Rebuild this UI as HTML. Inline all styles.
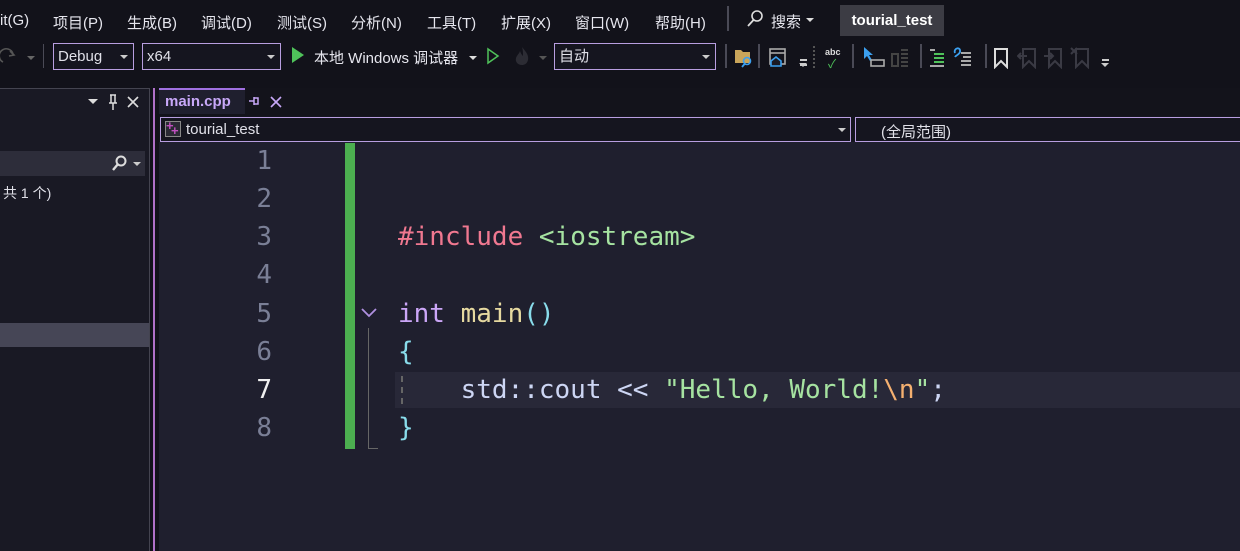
<!DOCTYPE html>
<html><head><meta charset="utf-8"><style>
*{margin:0;padding:0;box-sizing:border-box}
body{width:1240px;height:551px;overflow:hidden;background:#12121a;font-family:"Liberation Sans","Noto Sans CJK SC",sans-serif;color:#d6d6e0;position:relative;font-size:14px}
.a{position:absolute;white-space:nowrap}
.box{position:absolute;border:1px solid #b89ee0;background:#15151f;color:#e0e0e8;font-size:15px;padding-left:4px;line-height:25px}
.dd{position:absolute;right:5px;top:11px;width:0;height:0;border-left:4px solid transparent;border-right:4px solid transparent;border-top:4px solid #ccc}
.tri{position:absolute;width:0;height:0;border-left:4px solid transparent;border-right:4px solid transparent;border-top:4px solid #ccc}
.vs{position:absolute;width:2px;background:#4a4a56;top:44px;height:24px}
.code{position:absolute;font-family:"DejaVu Sans Mono","Liberation Mono",monospace;font-size:26px;line-height:38px;white-space:pre;left:398px}
.ln{position:absolute;font-family:"DejaVu Sans Mono",monospace;font-size:26px;line-height:38px;color:#7a7f96;width:60px;text-align:right;left:212px}
</style></head><body>
<div class="a" style="top:12px;left:0;font-size:15px;color:#e6e6ee">
<span class="a" style="left:0">it(G)</span>
<span class="a" style="left:53px">项目(P)</span>
<span class="a" style="left:127px">生成(B)</span>
<span class="a" style="left:201px">调试(D)</span>
<span class="a" style="left:277px">测试(S)</span>
<span class="a" style="left:351px">分析(N)</span>
<span class="a" style="left:427px">工具(T)</span>
<span class="a" style="left:501px">扩展(X)</span>
<span class="a" style="left:575px">窗口(W)</span>
<span class="a" style="left:655px">帮助(H)</span>
</div>
<div class="a" style="left:727px;top:6px;width:2px;height:25px;background:#4a4a56"></div>
<svg class="a" style="left:745px;top:9px" width="20" height="20"><circle cx="12" cy="7" r="5" fill="none" stroke="#ddd" stroke-width="1.6"/><line x1="8.5" y1="11" x2="3" y2="17" stroke="#ddd" stroke-width="1.8"/></svg>
<div class="a" style="left:771px;top:11px;font-size:15px;color:#e6e6ee">搜索</div>
<div class="tri" style="left:806px;top:18px;border-top-color:#ddd"></div>
<div class="a" style="left:840px;top:5px;width:104px;height:31px;background:#3c3c44;color:#fff;font-weight:bold;font-size:15px;line-height:31px;text-align:center">tourial_test</div>
<svg class="a" style="left:0;top:46px" width="18" height="20"><path d="M3 16 A7 7 0 1 1 13 8" fill="none" stroke="#555" stroke-width="1.6"/><path d="M10 5 L14 9 L9 10" fill="none" stroke="#555" stroke-width="1.6"/></svg>
<div class="tri" style="left:27px;top:56px;border-top-color:#666"></div>
<div class="vs" style="left:43px;width:1px"></div>
<div class="box" style="left:53px;top:43px;width:81px;height:27px">Debug<div class="dd"></div></div>
<div class="box" style="left:142px;top:43px;width:139px;height:27px">x64<div class="dd"></div></div>
<div class="a" style="left:292px;top:47px;border-top:8px solid transparent;border-bottom:8px solid transparent;border-left:12px solid #4fc25a"></div>
<div class="a" style="left:314px;top:47px;font-size:15px;color:#e6e6ee">本地 Windows 调试器</div>
<div class="tri" style="left:469px;top:56px;border-top-color:#ddd"></div>
<svg class="a" style="left:486px;top:47px" width="14" height="18"><path d="M2 2 L12 9 L2 16 Z" fill="none" stroke="#4fc25a" stroke-width="1.5"/></svg>
<svg class="a" style="left:512px;top:45px" width="20" height="22"><path d="M10 2 C14 7 17 10 16 15 C15 19 12 20 10 20 C6 20 3 17 4 13 C5 10 7 9 8 6 C9 9 10 10 11 11 C11 8 11 5 10 2Z" fill="#2c2c34"/></svg>
<div class="tri" style="left:539px;top:56px;border-top-color:#555"></div>
<div class="box" style="left:554px;top:43px;width:162px;height:27px">自动<div class="dd"></div></div>
<div class="vs" style="left:725px"></div>
<svg class="a" style="left:734px;top:46px" width="20" height="22"><path d="M1 4 H7 L9 6 H16 V17 H1Z" fill="#c9a55a"/><circle cx="13" cy="15" r="3.5" fill="none" stroke="#3ba0f0" stroke-width="1.6"/><line x1="11" y1="17.5" x2="8" y2="21" stroke="#3ba0f0" stroke-width="1.8"/></svg>
<div class="vs" style="left:758px"></div>
<svg class="a" style="left:768px;top:47px" width="20" height="22"><rect x="2" y="2" width="15" height="15" fill="none" stroke="#aaa" stroke-width="1.6"/><line x1="2" y1="6" x2="17" y2="6" stroke="#aaa" stroke-width="1.6"/><path d="M3 14 L8 10 L13 14 V19 H3Z" fill="#1a1a24" stroke="#3ba0f0" stroke-width="1.6"/></svg>
<div class="a" style="left:800px;top:59px;width:7px;height:7px;border-top:2px solid #ccc;border-bottom:2px solid #ccc"></div>
<div class="tri" style="left:799px;top:63px"></div>
<div class="a" style="left:813px;top:46px;height:22px;border-left:2px dotted #555"></div>
<div class="a" style="left:825px;top:47px;font-size:9px;color:#ddd;font-weight:bold">abc</div>
<div class="a" style="left:828px;top:55px;font-size:12px;color:#4fc25a">✓</div>
<div class="vs" style="left:852px"></div>
<svg class="a" style="left:862px;top:45px" width="24" height="24"><path d="M2 2 L2 14 L5 11 L8 16 L10 15 L7 10 L11 10Z" fill="#3ba0f0"/><rect x="9" y="15" width="13" height="6" fill="none" stroke="#aaa" stroke-width="1.6"/></svg>
<svg class="a" style="left:890px;top:46px" width="22" height="22"><path d="M2 8 H8 V20 H2Z M11 4 H18 M11 8 H18 M11 12 H18 M11 16 H18 M11 20 H18" fill="none" stroke="#444" stroke-width="2"/></svg>
<div class="vs" style="left:920px"></div>
<svg class="a" style="left:928px;top:46px" width="20" height="22"><path d="M2 4 H7 M6 8 H16 M6 12 H16 M6 16 H16 M2 20 H16" stroke="#aaa" stroke-width="2"/><path d="M6 8 H16 M6 12 H16 M6 16 H16" stroke="#4fc25a" stroke-width="2"/></svg>
<svg class="a" style="left:952px;top:45px" width="24" height="24"><path d="M9 8 H19 M11 12 H19 M9 16 H19 M9 20 H19" stroke="#aaa" stroke-width="2"/><path d="M3 8 C1 3 9 1 8 7 C7 10 4 10 3 12" fill="none" stroke="#3ba0f0" stroke-width="1.8"/></svg>
<div class="vs" style="left:985px"></div>
<svg class="a" style="left:993px;top:47px" width="16" height="22"><path d="M2 2 H14 V20 L8 14 L2 20Z" fill="none" stroke="#ddd" stroke-width="2"/></svg>
<svg class="a" style="left:1017px;top:47px" width="22" height="22"><path d="M6 2 H18 V20 L12 14 L6 20Z" fill="none" stroke="#3a3a44" stroke-width="2"/><path d="M1 9 H10 M4 6 L1 9 L4 12" fill="none" stroke="#3a3a44" stroke-width="2"/></svg>
<svg class="a" style="left:1043px;top:47px" width="22" height="22"><path d="M6 2 H18 V20 L12 14 L6 20Z" fill="none" stroke="#3a3a44" stroke-width="2"/><path d="M1 9 H10 M7 6 L10 9 L7 12" fill="none" stroke="#3a3a44" stroke-width="2"/></svg>
<svg class="a" style="left:1070px;top:47px" width="22" height="22"><path d="M6 2 H18 V20 L12 14 L6 20Z" fill="none" stroke="#3a3a44" stroke-width="2"/><path d="M1 1 L7 7 M7 1 L1 7" stroke="#3a3a44" stroke-width="2"/></svg>
<div class="a" style="left:1102px;top:59px;width:7px;height:7px;border-top:2px solid #ccc"></div>
<div class="tri" style="left:1101px;top:63px"></div>
<div class="a" style="left:0;top:88px;width:150px;height:463px;background:#191924;border-top:1px solid #444450;border-right:1px solid #444450"></div>
<div class="tri" style="left:88px;top:99px;border-top-color:#ddd;border-left-width:5px;border-right-width:5px;border-top-width:5px"></div>
<svg class="a" style="left:106px;top:93px" width="14" height="18"><path d="M4 2 H10 M5 2 V10 M9 2 V10 M3 10 H11 M7 10 V17" stroke="#ddd" stroke-width="1.5" fill="none"/></svg>
<svg class="a" style="left:126px;top:95px" width="14" height="14"><path d="M2 2 L12 12 M12 2 L2 12" stroke="#ddd" stroke-width="1.6"/></svg>
<div class="a" style="left:0;top:151px;width:145px;height:25px;background:#2d2d3a"></div>
<svg class="a" style="left:110px;top:154px" width="20" height="20"><circle cx="11" cy="7" r="4.5" fill="none" stroke="#ddd" stroke-width="2"/><line x1="8" y1="10" x2="3" y2="16" stroke="#ddd" stroke-width="2.4"/></svg>
<div class="tri" style="left:133px;top:162px"></div>
<div class="a" style="left:3px;top:183px;font-size:14px;color:#e0e0e8">共 1 个)</div>
<div class="a" style="left:0;top:323px;width:149px;height:24px;background:#464656"></div>
<div class="a" style="left:153px;top:88px;width:2px;height:463px;background:#b070c8"></div>
<div class="a" style="left:159px;top:88px;width:1081px;height:463px;background:#1f1f2e"></div>
<div class="a" style="left:159px;top:88px;width:1081px;height:28px;background:#13131b"></div>
<div class="a" style="left:159px;top:88px;width:86px;height:26px;background:#1f1f2e;border-top:2px solid #a070e0"></div>
<div class="a" style="left:165px;top:93px;font-size:15px;font-weight:bold;color:#c8a8f8">main.cpp</div>
<svg class="a" style="left:247px;top:95px" width="14" height="12"><path d="M2 6 H7 M7 2 V10 M7 3 H11 V9 H7" fill="none" stroke="#c8a8f8" stroke-width="1.5"/></svg>
<svg class="a" style="left:269px;top:95px" width="14" height="14"><path d="M2 2 L12 12 M12 2 L2 12" stroke="#c8a8f8" stroke-width="1.6"/></svg>
<div class="a" style="left:159px;top:116px;width:1081px;height:26px;background:#15151f"></div>
<div class="a" style="left:160px;top:117px;width:691px;height:25px;border:1px solid #b89ee0"></div>
<div class="a" style="left:165px;top:121px;width:16px;height:16px;border:1px solid #888;background:#2a2a34"></div>
<div class="a" style="left:166px;top:118px;font-size:13px;color:#c050c0;font-weight:bold">+</div>
<div class="a" style="left:171px;top:123px;font-size:13px;color:#c050c0;font-weight:bold">+</div>
<div class="a" style="left:186px;top:121px;font-size:15px;color:#e0e0e8">tourial_test</div>
<div class="tri" style="left:838px;top:128px"></div>
<div class="a" style="left:855px;top:117px;width:390px;height:25px;border:1px solid #b89ee0"></div>
<div class="a" style="left:881px;top:121px;font-size:15px;color:#e0e0e8">(全局范围)</div>
<div class="a" style="left:395px;top:372px;width:845px;height:36px;background:#282838"></div>
<div class="a" style="left:401px;top:376px;height:28px;border-left:2px dashed #666"></div>
<div class="a" style="left:345px;top:143px;width:10px;height:306px;background:#4caf50"></div>
<svg class="a" style="left:360px;top:306px" width="20" height="14"><path d="M2 3 L9 10 L16 3" fill="none" stroke="#b090e0" stroke-width="1.8"/></svg>
<div class="a" style="left:368px;top:328px;width:10px;height:121px;border-left:1px solid #666;border-bottom:1px solid #666"></div>
<div class="ln" style="top:142px">1</div>
<div class="ln" style="top:180px">2</div>
<div class="ln" style="top:218px">3</div>
<div class="ln" style="top:256px">4</div>
<div class="ln" style="top:295px">5</div>
<div class="ln" style="top:333px">6</div>
<div class="ln" style="top:371px;color:#f0f0f0">7</div>
<div class="ln" style="top:409px">8</div>
<div class="code" style="top:218px"><span style="color:#f07890">#include</span> <span style="color:#a6e3a1">&lt;iostream&gt;</span></div>
<div class="code" style="top:295px"><span style="color:#cba6f7">int</span> <span style="color:#e6d9a0">main</span><span style="color:#89dceb">()</span></div>
<div class="code" style="top:333px;color:#89dceb">{</div>
<div class="code" style="top:371px;color:#cdd6f4">    std::cout &lt;&lt; <span style="color:#a6e3a1">"Hello, World!</span><span style="color:#f5b070">\n</span><span style="color:#a6e3a1">"</span>;</div>
<div class="code" style="top:409px;color:#89dceb">}</div>
</body></html>
